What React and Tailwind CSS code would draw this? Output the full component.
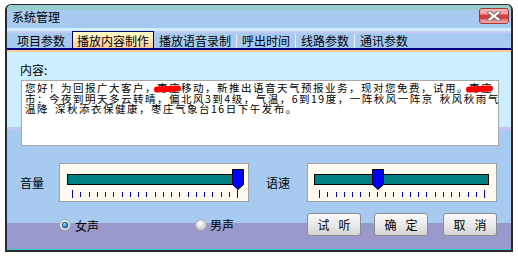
import React from "react";

function Tick({ end }) {
  return <div className={end ? "w-px h-[8px] bg-[#0000ff]" : "w-px h-[5px] bg-[#0000ff]"} />;
}

function Slider({ thumbLeft, trackLeft }) {
  const ticks = Array.from({ length: 21 }, (_, i) => i);
  return (
    <div className="relative w-[190px] h-[39px] border border-[#a0a0a0] bg-[#fffaf0]">
      <div
        className="absolute top-[10px] w-[175px] h-[11px] border border-black bg-[#008080]"
        style={{ left: trackLeft }}
      />
      <div
        className="absolute top-[26px] w-[166px] h-[8px] flex items-center justify-between"
        style={{ left: trackLeft + 5 }}
      >
        {ticks.map((i) => (
          <Tick key={i} end={i === 0 || i === 20} />
        ))}
      </div>
      <svg
        className="absolute top-[5px]"
        style={{ left: thumbLeft }}
        width="12"
        height="21"
        viewBox="0 0 12 21"
      >
        <polygon
          points="0.5,0.5 11.5,0.5 11.5,15.5 6,20.5 0.5,15.5"
          fill="#0000ff"
          stroke="#000"
          strokeWidth="1"
        />
      </svg>
    </div>
  );
}

function Radio({ checked }) {
  return (
    <svg width="12" height="12" viewBox="0 0 12 12">
      <defs>
        <radialGradient id={checked ? "rg1" : "rg2"} cx="40%" cy="35%" r="70%">
          <stop offset="0%" stopColor="#ffffff" />
          <stop offset="100%" stopColor={checked ? "#d8d8d8" : "#c4c4c4"} />
        </radialGradient>
        <radialGradient id="dot" cx="40%" cy="35%" r="70%">
          <stop offset="0%" stopColor="#7fd0ff" />
          <stop offset="100%" stopColor="#10609a" />
        </radialGradient>
      </defs>
      <circle cx="6" cy="6" r="5.4" fill={`url(#${checked ? "rg1" : "rg2"})`} stroke="#a8a8a8" strokeWidth="1" />
      {checked && <circle cx="6" cy="6" r="3" fill="url(#dot)" stroke="#104060" strokeWidth="0.6" />}
    </svg>
  );
}

function Btn({ a, b }) {
  return (
    <div className="w-[54px] h-[23px] rounded-[3px] border border-[#8c8c8c] bg-[linear-gradient(to_bottom,#fbfbfb,#e6e6e6_60%,#d4d4d4)] flex items-center justify-center gap-[9px] text-[12px] leading-[12px] text-black">
      <span>{a}</span>
      <span>{b}</span>
    </div>
  );
}

function Blot() {
  return <span className="absolute left-[-3px] top-[6px] w-[27px] h-[6px] rounded-full bg-[#ff0000] rotate-[-3deg]" />;
}

export default function App() {
  return (
    <div className="w-[518px] h-[256px] bg-white overflow-hidden font-['Noto_Sans_CJK_SC',sans-serif] text-[12px] text-black">
      <div className="ml-[5px] mt-[4px] w-[508px] h-[248px] border-t border-x-2 border-b-2 border-[#2a2a2a] rounded-t-[6px] overflow-hidden flex flex-col">
        {/* title bar */}
        <div className="h-[23px] shrink-0 flex items-start justify-between bg-[linear-gradient(to_bottom,#99cccc_0px,#99cccc_5px,#a6caf0_5px)]">
          <div className="pl-[5px] pt-[6px] leading-[12px]">系统管理</div>
          <div className="mt-[3px] mr-[2px] w-[30px] h-[16px] rounded-[3px] border border-[#a03838] bg-[linear-gradient(to_bottom,#f6b8b8_0%,#ee9a9a_35%,#d43c3c_45%,#d43c3c_65%,#e88a8a_80%,#f0a8a8_100%)] flex items-center justify-center">
            <svg width="14" height="10" viewBox="0 0 14 10">
              <path d="M2.5 1.5 L11.5 8.5 M11.5 1.5 L2.5 8.5" stroke="#707070" strokeWidth="4" strokeLinecap="square" />
              <path d="M2.5 1.5 L11.5 8.5 M11.5 1.5 L2.5 8.5" stroke="#ffffff" strokeWidth="2" strokeLinecap="square" />
            </svg>
          </div>
        </div>
        {/* tabs */}
        <div className="h-[20px] shrink-0 flex items-end bg-[linear-gradient(to_bottom,#cceeff_0px,#cceeff_3px,#c8c8f4_3px,#c8c8f4_5px,#a6caf0_5px)]">
          <div className="h-[14px] leading-[14px] pl-[10px] pr-[7px]">项目参数</div>
          <div className="w-[82px] h-[17px] border-t border-x border-[#000080] bg-[linear-gradient(to_bottom,#ffffcc,#ffcc99)] pt-[2px] text-center leading-[14px]">
            播放内容制作
          </div>
          <div className="h-[14px] leading-[14px] px-[5px]">播放语音录制</div>
          <div className="w-px h-[14px] bg-[#eef0ff]" />
          <div className="h-[14px] leading-[14px] px-[5px]">呼出时间</div>
          <div className="w-px h-[14px] bg-[#eef0ff]" />
          <div className="h-[14px] leading-[14px] px-[5px]">线路参数</div>
          <div className="w-px h-[14px] bg-[#eef0ff]" />
          <div className="h-[14px] leading-[14px] px-[5px]">通讯参数</div>
        </div>
        <div className="h-[2px] shrink-0 bg-[#000080]" />
        <div className="h-[2px] shrink-0 bg-[#ffcc99]" />
        {/* body */}
        <div className="flex-1 pl-[13px] pt-[12px] bg-[linear-gradient(to_bottom,#cceeff_0px,#cceeff_75px,#c4c4f0_75px,#c4c4f0_78px,#a6caf0_78px,#a6caf0_171px,#9999cc_171px,#9999cc_197px,#33cccc_197px)]">
          <div className="leading-[12px]">内容:</div>
          <div className="mt-[4px] ml-[1px] w-[478px] h-[66px] border border-[#a8a8a8] bg-white pl-[3px] pt-[2px] text-[10.5px] tracking-[1.5px] leading-[10.5px] whitespace-nowrap">
            <div>
              您好！为回报广大客户，
              <span className="relative">
                枣庄
                <Blot />
              </span>
              移动，新推出语音天气预报业务，现对您免费，试用。
              <span className="relative">
                枣庄
                <Blot />
              </span>
            </div>
            <div>
              市：今夜到明天多云转晴，偏北风3到4级，气温，6到19度，一阵秋风一阵京
              <span className="inline-block w-[6px]" />
              秋风秋雨气
            </div>
            <div>
              温降
              <span className="inline-block w-[6px]" />
              深秋添衣保健康，枣庄气象台16日下午发布。
            </div>
          </div>
          <div className="mt-[17px] flex items-center">
            <div className="w-[24px] leading-[12px] whitespace-nowrap">音量</div>
            <div className="ml-[15px]">
              <Slider trackLeft={7} thumbLeft={172} />
            </div>
            <div className="ml-[17px] w-[24px] leading-[12px] whitespace-nowrap">语速</div>
            <div className="ml-[17px]">
              <Slider trackLeft={6} thumbLeft={64} />
            </div>
          </div>
          <div className="mt-[11px] h-[23px] flex items-center">
            <div className="ml-[39px] flex items-center gap-[4px]">
              <Radio checked />
              <span className="leading-[12px] mt-[2px]">女声</span>
            </div>
            <div className="ml-[96px] flex items-center gap-[3px]">
              <Radio />
              <span className="leading-[12px]">男声</span>
            </div>
            <div className="ml-[73px]">
              <Btn a="试" b="听" />
            </div>
            <div className="ml-[13px]">
              <Btn a="确" b="定" />
            </div>
            <div className="ml-[15px]">
              <Btn a="取" b="消" />
            </div>
          </div>
        </div>
      </div>
    </div>
  );
}
